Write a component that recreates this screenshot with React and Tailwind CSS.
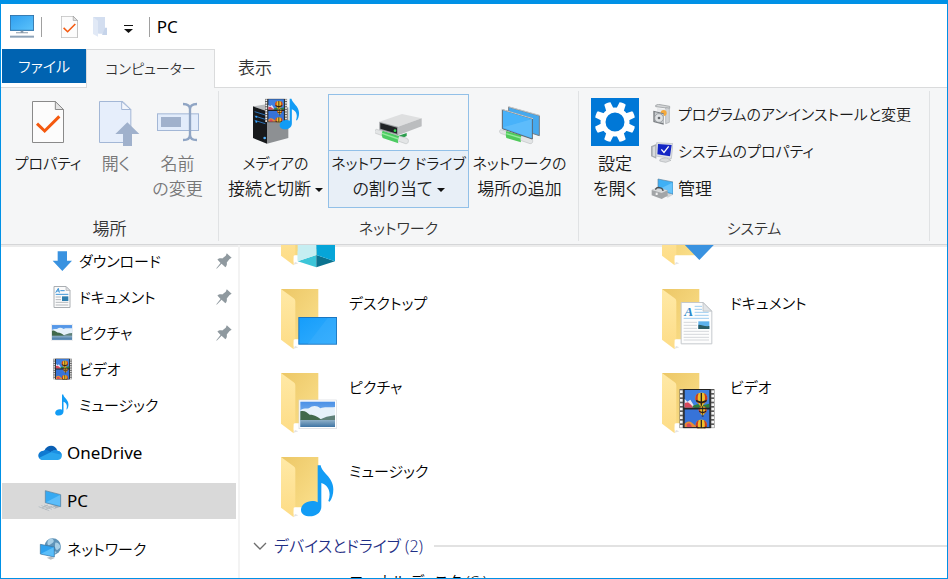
import clsx from 'clsx'

const TABS = [
  { id: 'computer', label: 'コンピューター', active: true },
  { id: 'view', label: '表示' },
]

// kanji labels are set a step larger than pure kana ones
function labelSize(text) {
  const kanji = text.match(/[\u4e00-\u9fff]/g) || []
  return kanji.length * 3 >= text.length ? 'text-[17px]' : 'text-[15px]'
}

/* ---------- icons ---------- */

function Monitor({ className }) {
  return (
    <svg viewBox="0 0 72 70" className={className} aria-hidden="true">
      <defs>
        <linearGradient id="screen" x1="0" y1="0" x2="1" y2="1">
          <stop offset="0" stopColor="#2f9ff0" />
          <stop offset="1" stopColor="#5cc3fb" />
        </linearGradient>
      </defs>
      <rect x="1" y="1" width="70" height="45" fill="url(#screen)" stroke="#2b6fa6" strokeWidth="3" />
      <path d="M32 47h8v5H32zM18 52h36v3H18z" fill="#8b9bab" />
      <path d="M0 62h72v6H0z" fill="#8ea3b8" />
    </svg>
  )
}

function CheckDoc({ className }) {
  return (
    <svg viewBox="0 0 96 126" className={className} aria-hidden="true">
      <path d="M1.5 1.5h69l24 24v99h-93z" fill="#fcfcfc" stroke="#8a8a8a" strokeWidth="3" />
      <path d="M70 1.5v24h24.500z" fill="#e4e4e4" stroke="#8a8a8a" strokeWidth="3" />
      <path d="M15 68l23 22 44-44" fill="none" stroke="#f4590f" strokeWidth="9" />
    </svg>
  )
}

function PaleFolder({ className }) {
  return (
    <svg viewBox="0 0 42 60" className={className} aria-hidden="true">
      <path d="M0 0h36v50H16z" fill="#d3def0" />
      <path d="M0 0l15 11v48L0 51z" fill="#e1e9f6" />
      <path d="M36 32h6v22H27z" fill="#c6d4ea" />
    </svg>
  )
}

function OpenDoc() {
  return (
    <svg viewBox="0 0 144 144" className="size-12" aria-hidden="true">
      <path d="M22.500 10.500h70l24 24v99h-94z" fill="#e6eefb" stroke="#a3b7d6" strokeWidth="3" />
      <path d="M89 10.500v24h27z" fill="#f3f6fc" stroke="#a3b7d6" strokeWidth="3" />
      <path d="M106 73l36 35h-22v36H93v-36H70z" fill="#a0b1cc" />
    </svg>
  )
}

function RenameIcon() {
  return (
    <svg viewBox="0 0 144 144" className="size-12" aria-hidden="true">
      <rect x="10.500" y="47.500" width="123" height="50" fill="#e2ecfb" stroke="#a3b7d6" strokeWidth="3" />
      <rect x="21" y="57" width="60" height="30" fill="#a0b1cc" />
      <path d="M87 18c12 0 21 4 21 16v76c0 12-9 16-21 16M129 18c-12 0-21 4-21 16v76c0 12 9 16 21 16" fill="none" stroke="#90a5c4" strokeWidth="7" />
    </svg>
  )
}

function Balloon({ x, y, r = 18 }) {
  return (
    <g transform={`translate(${x} ${y}) scale(${r / 18})`}>
      <path d="M-18-2C-18-24 18-24 18-2 18 8 6 14 4 22h-8C-6 14-18 8-18-2z" fill="#edc02c" />
      <path d="M-18-2C-18-10-13-16-8-17-13-6-12 6-5 18-9 11-18 8-18-2zM18-2C18-10 13-16 8-17 13-6 12 6 5 18 9 11 18 8 18-2z" fill="#c73a24" />
      <path d="M-2-18h4v38h-4zM-17 2l17 6 17-6-2 6-15 6-15-6z" fill="#2c2118" />
      <path d="M-4 23h8v5h-8z" fill="#2b1a10" />
    </g>
  )
}

function FilmShape() {
  return (
    <svg width="106" height="118" viewBox="0 0 106 118">
      <rect width="106" height="118" fill="#5a5a5a" />
      <rect x="12" width="82" height="118" fill="#222" />
      <rect x="16" y="3" width="74" height="53" fill="#3f80e0" />
      <rect x="16" y="61" width="74" height="54" fill="#3773d8" />
      <path d="M16 30l8 8 9-6 12 20v4H16z" fill="#e8e6f2" />
      <path d="M16 42l10-2 10 8 6 8H16z" fill="#d8485c" />
      <path d="M40 50l14-4 20 2 16-4v12H40z" fill="#2f7d3c" />
      <path d="M16 104c12-12 20-6 30 4l8 7H16z" fill="#e78b34" />
      <path d="M22 106c6-6 12-4 16 9H22z" fill="#d8485c" />
      <Balloon x={66} y={30} />
      <Balloon x={70} y={64} r={12} />
      <Balloon x={66} y={110} r={17} />
      <path d="M12 56h82v5H12zM12 115h82v3H12z" fill="#222" />
      {[0, 1, 2, 3, 4, 5, 6, 7, 8].map(i => (
        <g key={i} fill="#f4f4f4">
          <rect x="2" y={4 + i * 13} width="8" height="8" />
          <rect x="96" y={4 + i * 13} width="8" height="8" />
        </g>
      ))}
    </svg>
  )
}

function PictureShape() {
  return (
    <g>
      <defs>
        <linearGradient id="sky" x1="0" y1="0" x2="0" y2="1">
          <stop offset="0" stopColor="#4a90e6" />
          <stop offset="1" stopColor="#a9d0f4" />
        </linearGradient>
        <linearGradient id="lake" x1="0" y1="0" x2="0" y2="1">
          <stop offset="0" stopColor="#8fb0c8" />
          <stop offset="1" stopColor="#3f74a4" />
        </linearGradient>
      </defs>
      <rect x="1" y="1" width="112" height="86" fill="#fff" stroke="#d5d9dd" strokeWidth="2" />
      <rect x="5" y="6" width="104" height="76" fill="url(#sky)" />
      <path d="M5 32c10-8 18-4 26-6 12-10 24-8 34 0 12-6 26-2 44-4v36H5z" fill="#e6f1fa" />
      <path d="M5 35c12-4 18 2 28 10 16 0 26 8 38 17H5z" fill="#41694b" />
      <path d="M62 61c14-8 28-12 47-14v15z" fill="#5f8078" />
      <path d="M5 61h104v21H5z" fill="url(#lake)" />
    </g>
  )
}

function NoteShape({ fill = '#129cf5' }) {
  return (
    <path
      d="M50 0h9c3 22 38 36 38 72 0 16-4 28-11 37l-4-2c9-24 2-46-21-54v71c0 18-16 29-34 29C12 153 0 146 0 134c0-16 16-27 34-27 6 0 12 1 16 4z"
      fill={fill}
    />
  )
}

function MediaServer() {
  return (
    <svg viewBox="96 30 144 144" className="size-12" aria-hidden="true">
      <path d="M141 70l64-12v92l-64 17z" fill="#8d9093" />
      <path d="M99 55l58-9 48 12-64 12z" fill="#b9bcbf" />
      <path d="M99 55l42 15v97l-42-17z" fill="#17191c" />
      <path d="M104 71l32 10M104 84l32 10M104 97l32 10" stroke="#2d73b8" strokeWidth="3" />
      <circle cx="109" cy="86" r="3" fill="#39a5ff" />
      <circle cx="109" cy="101" r="3" fill="#39a5ff" />
      <circle cx="134" cy="150" r="4" fill="#4fb2ff" />
      <g transform="translate(135 32) scale(.63 .6)">
        <FilmShape />
      </g>
      <g transform="translate(179 32) scale(.6)">
        <NoteShape />
      </g>
    </svg>
  )
}

function NetworkDrive() {
  return (
    <svg viewBox="463 30 144 144" className="size-12" aria-hidden="true">
      <path d="M522 147l36-12v9l-30 14z" fill="#2b9d4c" />
      <path d="M467 124l92 27c7 4 5 17-4 16l-90-31c-5-2-4-10 2-12z" fill="#e3e5e6" stroke="#bfc2c4" strokeWidth="2" />
      <path d="M486 128l50 17c-5 7-5 14-3 21l-47-16c-3-7-4-14 0-22z" fill="#4ccb62" />
      <path d="M484 136l50 17" stroke="#94eb9c" strokeWidth="4" />
      <path d="M476 101l68-23 59 13-71 25z" fill="#dedfe0" />
      <path d="M532 116l71-25v24l-71 27z" fill="#bbbdbf" />
      <path d="M476 101l56 15v26l-56-17z" fill="#9a9da0" />
      <path d="M479 105l50 14v18l-50-15z" fill="#202325" />
      <circle cx="523" cy="128" r="4" fill="#35d655" />
    </svg>
  )
}

function AddLocation() {
  return (
    <svg viewBox="90 30 144 144" className="size-12" aria-hidden="true">
      <path d="M128 57l92 26v60l-92-30z" fill="#46a9ee" stroke="#767e85" strokeWidth="3" />
      <path d="M127 56l94 26" stroke="#c4c8cb" strokeWidth="3" />
      <path d="M104 125l92 27c7 4 5 16-4 15l-88-31c-5-2-4-10 0-11z" fill="#e3e5e6" stroke="#bfc2c4" strokeWidth="2" />
      <path d="M121 129l46 13c-4 7-4 13-2 21l-44-13c-2-7-2-14 0-21z" fill="#4fc95a" />
      <path d="M121 137l44 13" stroke="#94eb9c" strokeWidth="4" />
      <path d="M109 65l90 27v61l-90-31z" fill="#48b2fa" stroke="#5e666d" strokeWidth="3" />
      <path d="M111 118l86-24v56z" fill="#6cc3fc" opacity=".6" />
      <path d="M107 64l94 28" stroke="#c4c8cb" strokeWidth="3" />
    </svg>
  )
}

function SettingsGear() {
  return (
    <svg viewBox="0 0 144 144" className="size-12" aria-hidden="true">
      <rect width="144" height="144" fill="#0078d7" />
      <g transform="translate(72 72)" fill="#fff">
        {[22.5, 67.5, 112.5, 157.5, 202.5, 247.5, 292.5, 337.5].map(a => (
          <path key={a} d="M-12-36l2-24c6-2 14-2 20 0l2 24z" transform={`rotate(${a})`} />
        ))}
        <circle r="36" fill="none" stroke="#fff" strokeWidth="15" />
      </g>
    </svg>
  )
}

function UninstallIcon() {
  return (
    <svg viewBox="0 0 66 66" className="size-[22px]" aria-hidden="true">
      <path d="M14 4l8-3 34 6v6l-42-5z" fill="#d5d7d9" stroke="#8d9194" strokeWidth="2" />
      <path d="M44 11l11 2v42l-11 4z" fill="#d2d5d8" stroke="#a3a7aa" strokeWidth="2" />
      <path d="M18 12l26 4v14H18z" fill="#e6e8ea" />
      <circle cx="38" cy="27" r="9" fill="#f5a93b" />
      <path d="M7 20l31 8v34L7 54z" fill="#777b7f" />
      <path d="M11 24l27 7v27l-27-6z" fill="#c6cacd" />
      <circle cx="24" cy="42" r="13" fill="#dfe2e4" stroke="#8a8e92" strokeWidth="2" />
      <circle cx="24" cy="42" r="4" fill="#6a6e72" />
    </svg>
  )
}

function SystemIcon() {
  return (
    <svg viewBox="0 0 66 66" className="size-[22px]" aria-hidden="true">
      <path d="M0 16l16-7v44L0 46z" fill="#a6abb0" />
      <path d="M5 18l8-3v32l-8-3z" fill="#d9dcdf" />
      <path d="M28 54l18-4 14 8-16 6-18-4z" fill="#d9dbdd" stroke="#aeb2b5" strokeWidth="2" />
      <path d="M17 5l49 3-5 45-46-8z" fill="#dfe2e5" stroke="#b5babf" strokeWidth="2" />
      <path d="M21 9l41 3-5 34-38-6z" fill="#1426c4" />
      <path d="M31 25l8 9 14-18" fill="none" stroke="#fff" strokeWidth="4" />
    </svg>
  )
}

function ManageIcon() {
  return (
    <svg viewBox="0 0 66 66" className="size-[22px]" aria-hidden="true">
      <path d="M38 50l14-4 12 6-14 7z" fill="#d1d4d6" />
      <path d="M21 3l45 9v37L21 36z" fill="#3fb0f5" stroke="#5d84a0" strokeWidth="2" />
      <path d="M24 34l40-20v32z" fill="#67c4fb" />
      <path d="M2 36l14-6 34 7v16L32 63 2 52z" fill="#a2a5a7" />
      <path d="M2 36l14-6 34 7-18 8z" fill="#d7d9da" />
      <path d="M14 35c0-10 22-8 22 4" fill="none" stroke="#4a4d50" strokeWidth="4" />
      <path d="M14 44h6v7h-6z" fill="#f0f0f0" />
    </svg>
  )
}

function DownArrow() {
  return (
    <svg viewBox="0 0 66 66" className="size-[22px]" aria-hidden="true">
      <path d="M20 4h28v28h15L34 63 5 32h15z" fill="#3992e0" />
    </svg>
  )
}

function DocShape() {
  return (
    <g>
      <path d="M1.500 1.500h66l26 26v98h-92z" fill="#fdfdfd" stroke="#c4c8cc" strokeWidth="3" />
      <path d="M67 1.500v26h26z" fill="#e2e5e8" stroke="#b4b8bc" strokeWidth="2" />
      <text x="11" y="41" className="font-['Liberation_Serif'] text-[40px] font-bold italic" fill="#2a86c8">A</text>
      <path d="M42 13h22M42 22h22M42 31h42M42 40h42M9 49h76" stroke="#9ecdf0" strokeWidth="3" />
      <path d="M9 61h40M9 70h40M9 79h40M9 88h76M9 97h76M9 106h76M9 114h76" stroke="#d5d8db" strokeWidth="3" />
      <rect x="53" y="58" width="33" height="23" fill="#5eb2ec" />
      <path d="M53 68c12 0 18 6 33 4v9H53z" fill="#2c5c63" />
    </g>
  )
}

function DocIcon() {
  return (
    <svg viewBox="0 0 66 66" className="size-[22px]" aria-hidden="true">
      <path d="M9 1.500h36l12 12v51H9z" fill="#fbfbfb" stroke="#aaaeb2" strokeWidth="3" />
      <path d="M45 1.500v12h12z" fill="#dfe2e5" stroke="#aaaeb2" strokeWidth="2" />
      <path d="M14 20L22 7l3 13M17 15h8M28 14h13M14 25h38" fill="none" stroke="#3b93d6" strokeWidth="3" />
      <path d="M14 33h16M14 41h16M14 49h38M14 57h38" stroke="#b4b8bc" strokeWidth="3" />
      <rect x="33" y="31" width="19" height="14" fill="#2f7fae" />
    </svg>
  )
}

function PictureIcon() {
  return (
    <svg viewBox="0 -10 114 114" className="size-[22px]" aria-hidden="true">
      <PictureShape />
    </svg>
  )
}

function FilmIcon() {
  return (
    <svg viewBox="-12 -3 124 124" className="size-[22px]" aria-hidden="true">
      <FilmShape />
    </svg>
  )
}

function NoteIcon() {
  return (
    <svg viewBox="-30 -4 160 160" className="size-[22px]" aria-hidden="true">
      <NoteShape />
    </svg>
  )
}

function CloudIcon() {
  return (
    <svg viewBox="0 0 72 48" className="w-6" aria-hidden="true">
      <path d="M19 17C26-2 52-4 58 17l-20 14z" fill="#0a5fb4" />
      <path d="M12 44C-4 42-3 18 16 17c8-4 17 0 22 5l18 22z" fill="#0f7ad2" />
      <path d="M38 22c8-8 18-6 20-5 18 1 18 27 2 28H14c-6-1-8-4-10-7z" fill="#2aa5ee" />
      <path d="M38 22c6-7 14-7 20-5 8 1 12 6 13 12z" fill="#1b8fe2" />
    </svg>
  )
}

function PcIcon() {
  return (
    <svg viewBox="0 0 72 66" className="w-6" aria-hidden="true">
      <path d="M40 48l14-3 12 6-16 5z" fill="#aeb4b9" />
      <path d="M22 2l46 12v36L22 38z" fill="#36a9f2" stroke="#5c7f99" strokeWidth="2" />
      <path d="M24 37l42-22v32z" fill="#5dbdf9" />
      <path d="M0 50l22-7 30 9-18 12z" fill="#dcdfe2" />
      <path d="M2 50l32 12M10 47l32 11M18 45l30 9M12 54l18-9M22 58l20-9" stroke="#a8adb2" strokeWidth="2" />
    </svg>
  )
}

function NetworkIcon() {
  return (
    <svg viewBox="0 0 72 66" className="w-6" aria-hidden="true">
      <circle cx="44" cy="26" r="25" fill="#5f93b8" />
      <path d="M36 3c8-3 14 4 10 10-6 4-10 10-16 8-4-8 0-16 6-18zM52 14c8-2 14 6 16 14l-10 8c-8-2-8-14-6-22zM46 38l10 4-8 8z" fill="#a9cfe6" />
      <path d="M26 59l12-3 12 4-12 5z" fill="#b9bec2" />
      <path d="M7 19l42 8v30L7 48z" fill="#2fa1ee" stroke="#40739a" strokeWidth="2" />
      <path d="M9 47l38-19v27z" fill="#5cbef9" />
    </svg>
  )
}

function PinIcon() {
  return (
    <svg viewBox="0 0 46 48" className="w-4" aria-hidden="true">
      <path d="M31 1l14 13-6 3-8 10c1 6 0 10-4 14l-11-10L2 45l-1-1 12-15L4 19c4-4 9-4 14-3l10-8z" fill="#8f999f" />
    </svg>
  )
}

function FolderArt({ kind }) {
  return (
    <svg viewBox="0 0 180 192" className="h-16 w-15 shrink-0" aria-hidden="true">
      <defs>
        <linearGradient id="folderBack" x1="0" y1="0" x2="1" y2="1">
          <stop offset="0" stopColor="#ecc766" />
          <stop offset="1" stopColor="#fbe08c" />
        </linearGradient>
        <linearGradient id="folderFront" x1="0" y1="0" x2="0" y2="1">
          <stop offset="0" stopColor="#ffe9a6" />
          <stop offset="1" stopColor="#fddc86" />
        </linearGradient>
        <linearGradient id="desk" x1="0" y1="0" x2="1" y2="1">
          <stop offset="0" stopColor="#159dfb" />
          <stop offset="1" stopColor="#35aefd" />
        </linearGradient>
      </defs>
      <path d="M38 182l14-4-10-4z" fill="#e2e2e2" />
      <path d="M0 3h112v151H38z" fill="url(#folderBack)" />
      <path d="M0 3l38 28c4 3 5 6 5 10v112l-5 2v29L0 155z" fill="url(#folderFront)" />
      <path d="M39 155h8v10l-9 8z" fill="#fff" />
      {kind === 'desktop' && (
        <g>
          <rect x="53.500" y="88.500" width="113" height="80" fill="url(#desk)" stroke="#1b76c0" strokeWidth="3" />
          <path d="M80 168l60-78h26v78z" fill="#45b3fb" opacity=".35" />
        </g>
      )}
      {kind === 'picture' && <g transform="translate(53 83)"><PictureShape /></g>}
      {kind === 'document' && <g transform="translate(56 42)"><DocShape /></g>}
      {kind === 'video' && <g transform="translate(52 51)"><FilmShape /></g>}
      {kind === 'music' && <g transform="translate(60 28)"><NoteShape /></g>}
      {kind === 'objects' && (
        <g>
          <path d="M50 75l56-30v90l-56 35z" fill="#c6eef2" />
          <path d="M106 45l56 30v91l-56-31z" fill="#06a5d8" />
          <path d="M50 172l56-19v37z" fill="#3cc5d8" />
          <path d="M106 153l56 19-56 18z" fill="#0b7390" />
          <path d="M106 125v28l56 19v-30z" fill="#06a5d8" />
          <path d="M106 125v28l-56 19v-30z" fill="#c6eef2" />
        </g>
      )}
      {kind === 'download' && <path d="M86 60h52v52h28l-54 56-54-56h28z" fill="#3992e0" />}
    </svg>
  )
}

function Caret() {
  return (
    <svg viewBox="0 0 8 4" className="ml-1 inline-block w-2 align-middle" aria-hidden="true">
      <path d="M0 0h8L4 4z" fill="#111" />
    </svg>
  )
}

/* ---------- ribbon ---------- */

function RibbonButton({ icon, lines, className, disabled, caret, hot }) {
  return (
    <button
      type="button"
      disabled={disabled}
      className={clsx(
        'flex shrink-0 flex-col border text-center leading-[25px]',
        hot ? 'border-[#92c0e8] bg-[#e8eff7]' : 'border-transparent',
        disabled ? 'text-[#777]' : 'text-[#1a1a1a]',
        className,
      )}
    >
      <span className={clsx('flex h-14 w-full justify-center border-b pt-[3px]', hot ? 'border-[#92c0e8] bg-[#f5f6f7]' : 'border-transparent')}>
        {icon}
      </span>
      <span className="h-14 w-full whitespace-nowrap">
        {lines.map((line, i) => (
          <span key={line} className={clsx('block h-[25px]', labelSize(line))}>
            {line}
            {caret && i === lines.length - 1 && <Caret />}
          </span>
        ))}
      </span>
    </button>
  )
}

function SmallButton({ icon, label }) {
  return (
    <button type="button" className={clsx('flex h-[37px] items-center gap-[5px] whitespace-nowrap text-[#1a1a1a]', labelSize(label))}>
      {icon}
      {label}
    </button>
  )
}

function RibbonGroup({ label, className, children }) {
  return (
    <section className="my-[3px] flex shrink-0 flex-col border-r border-[#e0e2e4]" aria-label={label}>
      <div className={clsx('flex grow items-start pt-[3px]', className)}>{children}</div>
      <h2 className={clsx('text-center leading-[25px] text-[#333]', labelSize(label))}>{label}</h2>
    </section>
  )
}

/* ---------- navigation ---------- */

const QUICK = [
  { label: 'ダウンロード', icon: <DownArrow />, pinned: true },
  { label: 'ドキュメント', icon: <DocIcon />, pinned: true },
  { label: 'ピクチャ', icon: <PictureIcon />, pinned: true },
  { label: 'ビデオ', icon: <FilmIcon /> },
  { label: 'ミュージック', icon: <NoteIcon /> },
]

const ROOTS = [
  { label: 'OneDrive', icon: <CloudIcon />, latin: true },
  { label: 'PC', icon: <PcIcon />, latin: true, selected: true },
  { label: 'ネットワーク', icon: <NetworkIcon /> },
]

// the first row is scrolled under the ribbon, only the foot of its icons shows
const FOLDERS = [
  { kind: 'objects' },
  { kind: 'download' },
  { label: 'デスクトップ', kind: 'desktop' },
  { label: 'ドキュメント', kind: 'document' },
  { label: 'ピクチャ', kind: 'picture' },
  { label: 'ビデオ', kind: 'video' },
  { label: 'ミュージック', kind: 'music' },
]

export default function App() {
  return (
    <div className="flex h-screen flex-col overflow-hidden border border-t-4 border-[#0091e6] bg-white font-['Noto_Sans','Noto_Sans_CJK_JP',sans-serif] text-[15px] font-[350] text-black [font-feature-settings:'palt']">
      <header className="flex h-[45px] shrink-0 items-center pt-px pl-[9px]">
        <Monitor className="w-6" />
        <span className="ml-[7px] h-5 w-px bg-[#a0a0a0]" />
        <button type="button" className="ml-[19px]" aria-label="プロパティ"><CheckDoc className="h-[22px]" /></button>
        <button type="button" className="ml-[15px]" aria-label="新しいフォルダー"><PaleFolder className="h-5" /></button>
        <button type="button" className="ml-[17px]" aria-label="クイック アクセス ツール バーのカスタマイズ">
          <svg viewBox="0 0 9 8" className="mt-1 w-[9px]" aria-hidden="true">
            <path d="M0 0h9v1H0zM0 4h9L4.500 8z" fill="#111" />
          </svg>
        </button>
        <span className="ml-4 h-5 w-px bg-[#a0a0a0]" />
        <h1 className="ml-[7px] text-[17px] font-normal">PC</h1>
      </header>

      <nav className="flex h-[39px] shrink-0 border-b border-[#dadbdc] pl-px" aria-label="リボン タブ">
        <button type="button" className="h-[34px] w-21 bg-[#0063b1] text-white">ファイル</button>
        {TABS.map(t => (
          <button
            key={t.id}
            type="button"
            className={clsx(
              'text-[#333]',
              t.active ? '-mb-px w-[129px] border border-b-0 border-[#dadbdc] bg-[#f5f6f7] text-sm' : 'w-20 text-[17px]',
            )}
          >
            {t.label}
          </button>
        ))}
      </nav>

      <div className="flex h-[157px] shrink-0 border-b border-[#d5d6d8] bg-[#f5f6f7]">
        <RibbonGroup label="場所" className="pr-2 pl-2">
          <RibbonButton icon={<CheckDoc className="mt-[3px] h-[42px]" />} lines={['プロパティ']} className="w-[78px]" />
          <RibbonButton icon={<OpenDoc />} lines={['開く']} className="w-[58px]" disabled />
          <RibbonButton icon={<RenameIcon />} lines={['名前', 'の変更']} className="w-[65px]" disabled />
        </RibbonGroup>
        <RibbonGroup label="ネットワーク" className="pr-2 pl-1">
          <RibbonButton icon={<MediaServer />} lines={['メディアの', '接続と切断']} className="w-[105px]" caret />
          <RibbonButton icon={<NetworkDrive />} lines={['ネットワーク ドライブ', 'の割り当て']} className="w-[141px]" caret hot />
          <RibbonButton icon={<AddLocation />} lines={['ネットワークの', '場所の追加']} className="w-[101px]" />
        </RibbonGroup>
        <RibbonGroup label="システム" className="pr-[14px] pl-[7px]">
          <RibbonButton icon={<SettingsGear />} lines={['設定', 'を開く']} className="w-[58px]" />
          <div className="ml-[7px] flex w-[264px] flex-col pt-0.5">
            <SmallButton icon={<UninstallIcon />} label="プログラムのアンインストールと変更" />
            <SmallButton icon={<SystemIcon />} label="システムのプロパティ" />
            <SmallButton icon={<ManageIcon />} label="管理" />
          </div>
        </RibbonGroup>
      </div>

      <div className="flex min-h-0 grow overflow-hidden shadow-[inset_0_2px_0_#ececec]">
        <aside className="-mt-0.5 flex w-[239px] shrink-0 flex-col gap-3 border-r-2 border-[#f3f3f3] pr-0.5 pl-px">
          <ul>
            {QUICK.map(item => (
              <li key={item.label}>
                <a href="#" className="flex h-9 items-center pr-1 pl-[49px]">
                  {item.icon}
                  <span className="ml-[6px] grow">{item.label}</span>
                  {item.pinned && <PinIcon />}
                </a>
              </li>
            ))}
          </ul>
          {ROOTS.map(item => (
            <a key={item.label} href="#" className={clsx('flex h-9 shrink-0 items-center gap-[5px] pl-9', item.selected && 'bg-[#d9d9d9]', item.latin && 'text-[17px] font-normal')}>
              {item.icon}
              {item.label}
            </a>
          ))}
        </aside>

        <main className="-mt-[41px] min-w-0 grow pl-[41px]">
          <ul className="grid grid-cols-[381px_1fr] gap-y-5">
            {FOLDERS.map(f => (
              <li key={f.kind} className="flex h-16 gap-2">
                <FolderArt kind={f.kind} />
                {f.label && <span className="pt-1 whitespace-nowrap">{f.label}</span>}
              </li>
            ))}
          </ul>
          <h2 className="mt-[14px] -ml-7 flex items-center text-base text-[#1f2f86]">
            <svg viewBox="0 0 14 8" className="mr-[7px] w-3.5" aria-hidden="true">
              <path d="M1 1l6 6 6-6" fill="none" stroke="#6d6d6d" strokeWidth="1.300" />
            </svg>
            デバイスとドライブ (2)
            <span className="ml-[11px] h-0.5 grow bg-[#e2e2e2]" />
          </h2>
          <p className="pt-3 pl-[68px]">ローカル ディスク (C:)</p>
        </main>
      </div>
    </div>
  )
}
